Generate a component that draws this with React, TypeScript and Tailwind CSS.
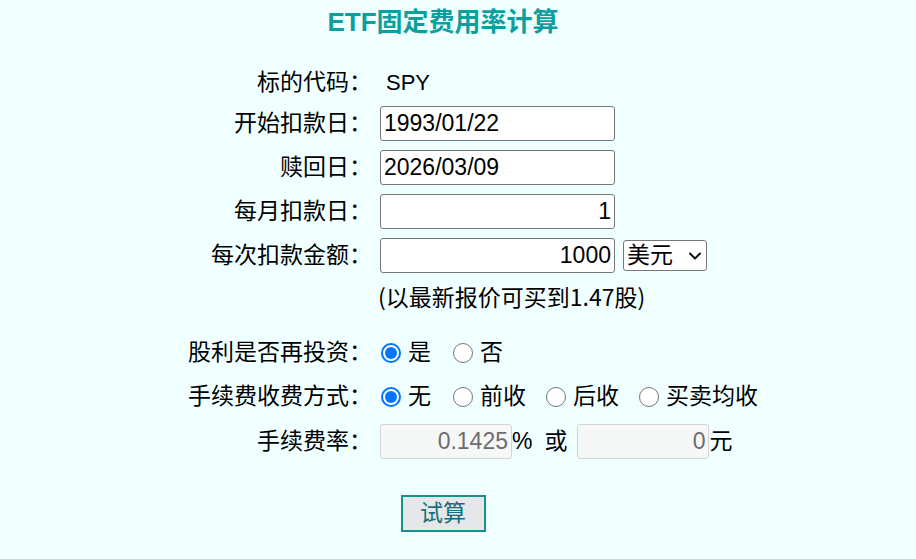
import React from "react";

const FONT = { fontFamily: '"Liberation Sans", "Noto Sans CJK SC", sans-serif' };

function Radio({ checked }: { checked?: boolean }) {
  return checked ? (
    <span className="ml-[1px] mr-[7px] flex h-[20px] w-[20px] shrink-0 items-center justify-center rounded-full border-[2px] border-[#0075ff] bg-white">
      <span className="h-[12px] w-[12px] rounded-full bg-[#0075ff]" />
    </span>
  ) : (
    <span className="ml-[1px] mr-[7px] h-[20px] w-[20px] shrink-0 rounded-full border-[1.5px] border-[#767676] bg-white" />
  );
}

function Label({ children }: { children: React.ReactNode }) {
  return <div className="w-[372px] shrink-0 text-right">{children}</div>;
}

function TextInput({ value, right }: { value: string; right?: boolean }) {
  return (
    <div
      className={`flex h-[35px] w-[235px] items-center rounded-[3px] border border-[#767676] bg-white px-[3px] ${right ? "justify-end" : "justify-start"}`}
    >
      <span className="leading-none">{value}</span>
    </div>
  );
}

function DisabledInput({ value }: { value: string }) {
  return (
    <div className="flex h-[35px] w-[132px] items-center justify-end rounded-[3px] border border-[#d4d4d4] bg-[#f6f7f7] px-[3px] text-[#6d6d6d]">
      <span className="leading-none">{value}</span>
    </div>
  );
}

export default function App() {
  return (
    <div className="min-h-[559px] w-full bg-[#f0ffff] text-[23px] text-black" style={FONT}>
      <div className="w-[886px]">
        <div className="pt-[7px] text-center text-[26px] font-bold leading-[30px] text-[#0e9e9e]">
          ETF固定费用率计算
        </div>

        <div className="mt-[28px] flex h-[35px] items-center">
          <Label>标的代码：</Label>
          <div className="ml-[14px] text-[22px] leading-none">SPY</div>
        </div>

        <div className="mt-[6px] flex h-[35px] items-center">
          <Label>开始扣款日：</Label>
          <div className="ml-[8px]">
            <TextInput value="1993/01/22" />
          </div>
        </div>

        <div className="mt-[9px] flex h-[35px] items-center">
          <Label>赎回日：</Label>
          <div className="ml-[8px]">
            <TextInput value="2026/03/09" />
          </div>
        </div>

        <div className="mt-[9px] flex h-[35px] items-center">
          <Label>每月扣款日：</Label>
          <div className="ml-[8px]">
            <TextInput value="1" right />
          </div>
        </div>

        <div className="mt-[9px] flex h-[35px] items-center">
          <Label>每次扣款金额：</Label>
          <div className="ml-[8px] flex items-center">
            <TextInput value="1000" right />
            <div className="ml-[8px] flex h-[31px] w-[84px] items-center justify-between rounded-[3px] border border-[#767676] bg-white pl-[3px] pr-[4px]">
              <span className="leading-none">美元</span>
              <svg width="14" height="10" viewBox="0 0 14 10" className="mt-[1px]">
                <path d="M2 2.5 L7 7.5 L12 2.5" fill="none" stroke="#111" strokeWidth="2" strokeLinecap="round" strokeLinejoin="round" />
              </svg>
            </div>
          </div>
        </div>

        <div className="mt-[6px] flex h-[35px] items-center">
          <Label>{""}</Label>
          <div
            className="ml-[6px] leading-none"
            style={{ fontFamily: '"Noto Sans CJK SC", sans-serif' }}
          >
            (以最新报价可买到1.47股)
          </div>
        </div>

        <div className="mt-[21px] flex h-[35px] items-center">
          <Label>股利是否再投资：</Label>
          <div className="ml-[8px] flex items-center">
            <Radio checked />
            <span className="mr-[21px] leading-none">是</span>
            <Radio />
            <span className="leading-none">否</span>
          </div>
        </div>

        <div className="mt-[9px] flex h-[35px] items-center">
          <Label>手续费收费方式：</Label>
          <div className="ml-[8px] flex items-center">
            <Radio checked />
            <span className="mr-[21px] leading-none">无</span>
            <Radio />
            <span className="mr-[19px] leading-none">前收</span>
            <Radio />
            <span className="mr-[19px] leading-none">后收</span>
            <Radio />
            <span className="leading-none">买卖均收</span>
          </div>
        </div>

        <div className="mt-[10px] flex h-[35px] items-center">
          <Label>手续费率：</Label>
          <div className="ml-[8px] flex items-center">
            <DisabledInput value="0.1425" />
            <span className="leading-none">%</span>
            <span className="ml-[12px] leading-none">或</span>
            <span className="ml-[10px]">
              <DisabledInput value="0" />
            </span>
            <span className="leading-none">元</span>
          </div>
        </div>

        <div className="mt-[36px] flex justify-center">
          <div className="flex h-[37px] w-[85px] items-center justify-center border-2 border-[#15918f] bg-[#e5e7e9] text-[#15707c]">
            <span className="leading-none">试算</span>
          </div>
        </div>
      </div>
    </div>
  );
}
